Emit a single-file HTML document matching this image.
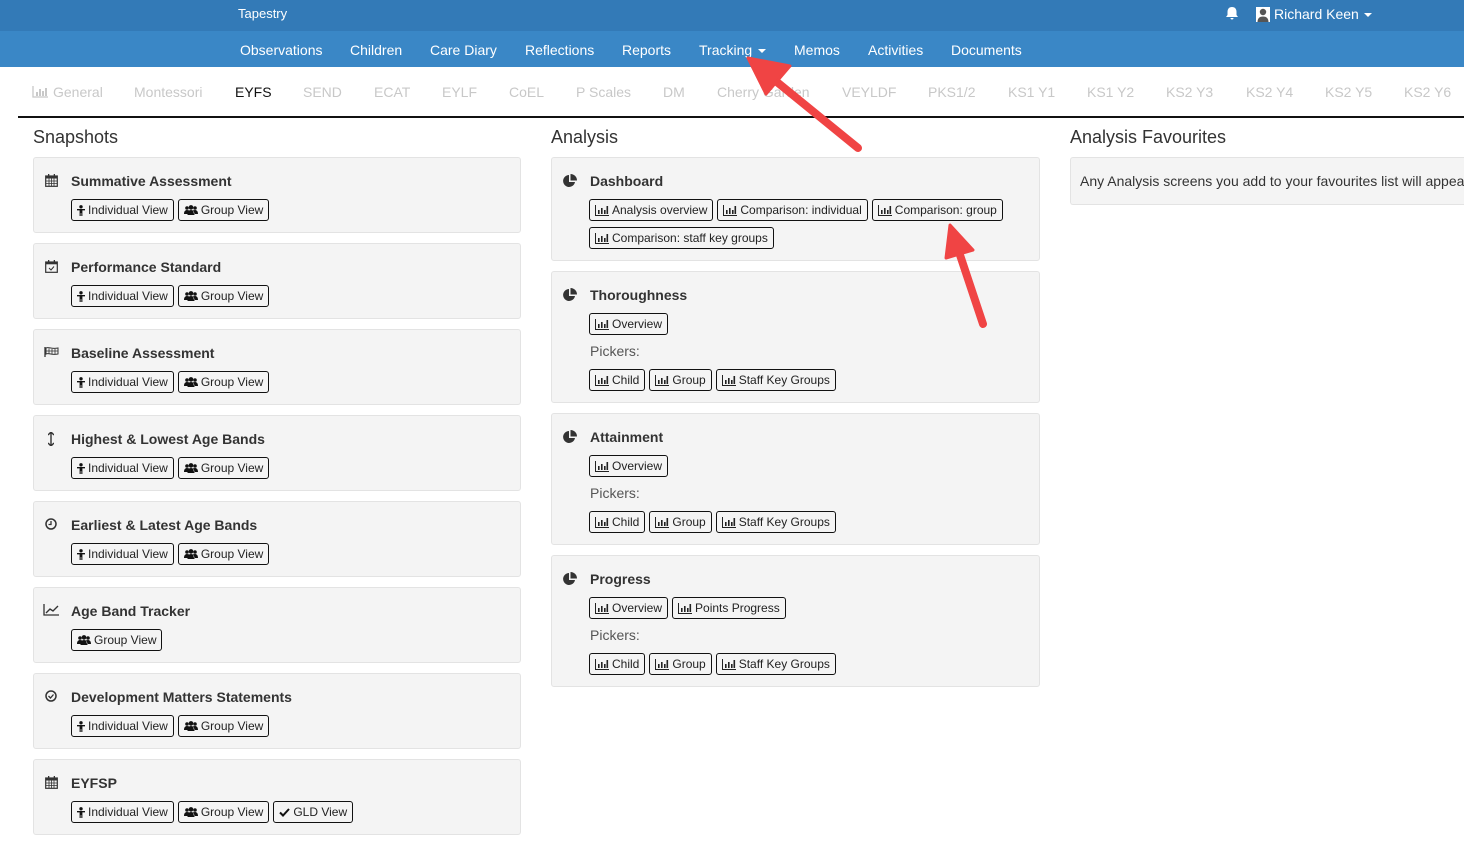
<!DOCTYPE html>
<html><head><meta charset="utf-8"><style>
*{box-sizing:border-box;margin:0;padding:0}
body{width:1464px;height:851px;overflow:hidden;background:#fff;font-family:"Liberation Sans",Arial,sans-serif;color:#333;position:relative}
.abs{position:absolute}
.top{left:0;top:0;width:1464px;height:31px;background:#337ab7}
.nav{left:0;top:31px;width:1464px;height:36px;background:#3a87c6}
.nv{position:absolute;top:42px;color:#fff;font-size:14px}
.tab{position:absolute;top:84px;color:#c8c8c8;font-size:14px}
.line{left:18px;top:116px;width:1446px;height:2px;background:#111}
h2{position:absolute;font-weight:normal;font-size:18px;color:#333;top:127px}
.p{position:absolute;background:#f4f4f4;border:1px solid #e3e3e3;border-radius:3px}
.t{position:absolute;font-weight:bold;font-size:14px;color:#333}
.row{position:absolute;display:flex;gap:4px}
.b{height:22px;border:1px solid #111;border-radius:3px;font-size:12px;color:#222;padding:0 5px;display:flex;align-items:center;white-space:nowrap}
.b svg{margin-right:3px}
.pk{position:absolute;font-size:14px;color:#555}
</style></head><body>
<svg width="0" height="0" style="position:absolute">
<defs>
<symbol id="per" viewBox="0 0 8 11"><circle cx="4" cy="1.8" r="1.7" fill="#111"/><path d="M0 4h8v1.4H5.4V11H4.3V8h-.6v3H2.6V5.4H0z" fill="#111"/></symbol>
<symbol id="grp" viewBox="0 0 14 10"><circle cx="3" cy="3" r="1.8" fill="#111"/><circle cx="11" cy="3" r="1.8" fill="#111"/><circle cx="7" cy="2.4" r="2.3" fill="#111"/><path d="M0 9c0-3 1.5-4 3-4s2 .5 2 .5L4 9z M14 9c0-3-1.5-4-3-4s-2 .5-2 .5L10 9z M3.5 10c0-3.5 1.5-5 3.5-5s3.5 1.5 3.5 5z" fill="#111"/></symbol>
<symbol id="bar" viewBox="0 0 14 11"><path d="M.5 0v10.5H14" stroke="#222" fill="none"/><rect x="3" y="5" width="1.6" height="4" fill="#222"/><rect x="6" y="3" width="1.6" height="6" fill="#222"/><rect x="9" y="5" width="1.6" height="4" fill="#222"/><rect x="11.5" y="1" width="1.6" height="8" fill="#222"/></symbol>
<symbol id="pie" viewBox="0 0 14 14"><path d="M6 1a6 6 0 1 0 6 7H6z" fill="#333"/><path d="M7.5 0v6.5H14A6.5 6.5 0 0 0 7.5 0z" fill="#333"/></symbol>
<symbol id="cal" viewBox="0 0 13 13"><rect x=".7" y="2" width="11.6" height="10.3" fill="none" stroke="#333" stroke-width="1.2"/><rect x=".7" y="2" width="11.6" height="2.5" fill="#333"/><rect x="3" y="0" width="1.3" height="3" fill="#333"/><rect x="8.7" y="0" width="1.3" height="3" fill="#333"/><path d="M1 7h11M1 9.5h11M4 4.5v8M6.5 4.5v8M9 4.5v8" stroke="#333" stroke-width=".8"/></symbol>
</defs></svg>
<div class="abs top"></div>
<div class="abs" style="left:238px;top:6px;color:#fff;font-size:13px">Tapestry</div>
<svg class="abs" style="left:1225px;top:6px" width="14" height="15" viewBox="0 0 14 15"><path d="M7 1c-3 0-4.5 2-4.5 5v3L1 11h12l-1.5-2V6C11.5 3 10 1 7 1z M5.5 12a1.5 1.5 0 0 0 3 0z" fill="#fff"/></svg>
<div class="abs" style="left:1256px;top:7px;width:14px;height:15px;background:#fff"><svg width="14" height="15" viewBox="0 0 14 15"><circle cx="7" cy="5" r="3.2" fill="#555"/><path d="M1.5 15c0-4 2.5-5.5 5.5-5.5s5.5 1.5 5.5 5.5z" fill="#555"/></svg></div>
<div class="abs" style="left:1274px;top:6px;color:#fff;font-size:14px">Richard Keen</div>
<div class="abs" style="left:1364px;top:13px;border-left:4px solid transparent;border-right:4px solid transparent;border-top:4px solid #fff"></div>
<div class="abs nav"></div>
<div class="nv" style="left:240px">Observations</div>
<div class="nv" style="left:350px">Children</div>
<div class="nv" style="left:430px">Care Diary</div>
<div class="nv" style="left:525px">Reflections</div>
<div class="nv" style="left:622px">Reports</div>
<div class="nv" style="left:699px">Tracking</div>
<div class="abs" style="left:758px;top:49px;border-left:4px solid transparent;border-right:4px solid transparent;border-top:4px solid #fff"></div>
<div class="nv" style="left:794px">Memos</div>
<div class="nv" style="left:868px">Activities</div>
<div class="nv" style="left:951px">Documents</div>

<svg class="abs" style="left:32px;top:86px" width="16" height="12" viewBox="0 0 16 12"><path d="M1 0v11h15" stroke="#c8c8c8" fill="none" stroke-width="1.3"/><rect x="4" y="6" width="2" height="4" fill="#c8c8c8"/><rect x="7" y="3" width="2" height="7" fill="#c8c8c8"/><rect x="10" y="5" width="2" height="5" fill="#c8c8c8"/><rect x="13" y="2" width="2" height="8" fill="#c8c8c8"/></svg>
<div class="tab" style="left:53px">General</div>
<div class="tab" style="left:134px">Montessori</div>
<div class="tab" style="left:235px;color:#111">EYFS</div>
<div class="tab" style="left:303px">SEND</div>
<div class="tab" style="left:374px">ECAT</div>
<div class="tab" style="left:442px">EYLF</div>
<div class="tab" style="left:509px">CoEL</div>
<div class="tab" style="left:576px">P Scales</div>
<div class="tab" style="left:663px">DM</div>
<div class="tab" style="left:717px">Cherry Garden</div>
<div class="tab" style="left:842px">VEYLDF</div>
<div class="tab" style="left:928px">PKS1/2</div>
<div class="tab" style="left:1008px">KS1 Y1</div>
<div class="tab" style="left:1087px">KS1 Y2</div>
<div class="tab" style="left:1166px">KS2 Y3</div>
<div class="tab" style="left:1246px">KS2 Y4</div>
<div class="tab" style="left:1325px">KS2 Y5</div>
<div class="tab" style="left:1404px">KS2 Y6</div>
<div class="abs line"></div>

<h2 style="left:33px">Snapshots</h2>
<h2 style="left:551px">Analysis</h2>
<h2 style="left:1070px">Analysis Favourites</h2>

<div class="p" style="left:33px;top:157px;width:488px;height:76px"></div>
<div class="p" style="left:33px;top:243px;width:488px;height:76px"></div>
<div class="p" style="left:33px;top:329px;width:488px;height:76px"></div>
<div class="p" style="left:33px;top:415px;width:488px;height:76px"></div>
<div class="p" style="left:33px;top:501px;width:488px;height:76px"></div>
<div class="p" style="left:33px;top:587px;width:488px;height:76px"></div>
<div class="p" style="left:33px;top:673px;width:488px;height:76px"></div>
<div class="p" style="left:33px;top:759px;width:488px;height:76px"></div>

<svg class="abs" style="left:45px;top:174px" width="13" height="13"><use href="#cal"/></svg>
<div class="t" style="left:71px;top:173px">Summative Assessment</div>
<svg class="abs" style="left:45px;top:260px" width="13" height="13" viewBox="0 0 13 13"><rect x=".7" y="2" width="11.6" height="10.3" fill="none" stroke="#333" stroke-width="1.2"/><rect x=".7" y="2" width="11.6" height="2.3" fill="#333"/><rect x="3" y="0" width="1.3" height="3" fill="#333"/><rect x="8.7" y="0" width="1.3" height="3" fill="#333"/><path d="M4 8l2 2 3-3.5" stroke="#333" fill="none" stroke-width="1"/></svg>
<div class="t" style="left:71px;top:259px">Performance Standard</div>
<svg class="abs" style="left:44px;top:347px" width="15" height="10" viewBox="0 0 15 10"><path d="M1 0v10" stroke="#333" stroke-width="1.3"/><path d="M2 1c3-1.5 5 1.5 12 0v6c-7 1.5-9-1.5-12 0z" fill="none" stroke="#333" stroke-width="1"/><path d="M5 1.5v5M8 2v5M11 2v5M2 4h12" stroke="#333" stroke-width=".8"/></svg>
<div class="t" style="left:71px;top:345px">Baseline Assessment</div>
<svg class="abs" style="left:48px;top:432px" width="6" height="14" viewBox="0 0 6 14"><path d="M3 1v12M0 3l3-3 3 3M0 11l3 3 3-3" stroke="#333" stroke-width="1.4" fill="none"/></svg>
<div class="t" style="left:71px;top:431px">Highest &amp; Lowest Age Bands</div>
<svg class="abs" style="left:45px;top:518px" width="12" height="12" viewBox="0 0 12 12"><circle cx="6" cy="6" r="5" fill="none" stroke="#333" stroke-width="1.5"/><path d="M6 3v3.5H3.5" stroke="#333" stroke-width="1.3" fill="none"/></svg>
<div class="t" style="left:71px;top:517px">Earliest &amp; Latest Age Bands</div>
<svg class="abs" style="left:43px;top:604px" width="16" height="12" viewBox="0 0 16 12"><path d="M1 0v11h15" stroke="#333" fill="none" stroke-width="1.3"/><path d="M3 9l4-4 3 2 5-5" stroke="#333" fill="none" stroke-width="1.4"/></svg>
<div class="t" style="left:71px;top:603px">Age Band Tracker</div>
<svg class="abs" style="left:45px;top:690px" width="12" height="12" viewBox="0 0 12 12"><circle cx="6" cy="6" r="5" fill="none" stroke="#333" stroke-width="1.5"/><path d="M3.5 6l2 2 3-3.5" stroke="#333" stroke-width="1.3" fill="none"/></svg>
<div class="t" style="left:71px;top:689px">Development Matters Statements</div>
<svg class="abs" style="left:45px;top:776px" width="13" height="13"><use href="#cal"/></svg>
<div class="t" style="left:71px;top:775px">EYFSP</div>

<div class="row" style="left:71px;top:199px"><div class="b"><svg width="8" height="11"><use href="#per"/></svg>Individual View</div><div class="b"><svg width="14" height="10"><use href="#grp"/></svg>Group View</div></div>
<div class="row" style="left:71px;top:285px"><div class="b"><svg width="8" height="11"><use href="#per"/></svg>Individual View</div><div class="b"><svg width="14" height="10"><use href="#grp"/></svg>Group View</div></div>
<div class="row" style="left:71px;top:371px"><div class="b"><svg width="8" height="11"><use href="#per"/></svg>Individual View</div><div class="b"><svg width="14" height="10"><use href="#grp"/></svg>Group View</div></div>
<div class="row" style="left:71px;top:457px"><div class="b"><svg width="8" height="11"><use href="#per"/></svg>Individual View</div><div class="b"><svg width="14" height="10"><use href="#grp"/></svg>Group View</div></div>
<div class="row" style="left:71px;top:543px"><div class="b"><svg width="8" height="11"><use href="#per"/></svg>Individual View</div><div class="b"><svg width="14" height="10"><use href="#grp"/></svg>Group View</div></div>
<div class="row" style="left:71px;top:629px"><div class="b"><svg width="14" height="10"><use href="#grp"/></svg>Group View</div></div>
<div class="row" style="left:71px;top:715px"><div class="b"><svg width="8" height="11"><use href="#per"/></svg>Individual View</div><div class="b"><svg width="14" height="10"><use href="#grp"/></svg>Group View</div></div>
<div class="row" style="left:71px;top:801px"><div class="b"><svg width="8" height="11"><use href="#per"/></svg>Individual View</div><div class="b"><svg width="14" height="10"><use href="#grp"/></svg>Group View</div><div class="b"><svg width="11" height="9" viewBox="0 0 11 9"><path d="M1 4.5l3 3L10 1" stroke="#111" stroke-width="2" fill="none"/></svg>GLD View</div></div>

<div class="p" style="left:551px;top:157px;width:489px;height:104px"></div>
<div class="p" style="left:551px;top:271px;width:489px;height:132px"></div>
<div class="p" style="left:551px;top:413px;width:489px;height:132px"></div>
<div class="p" style="left:551px;top:555px;width:489px;height:132px"></div>

<svg class="abs" style="left:563px;top:174px" width="14" height="14"><use href="#pie"/></svg>
<div class="t" style="left:590px;top:173px">Dashboard</div>
<svg class="abs" style="left:563px;top:288px" width="14" height="14"><use href="#pie"/></svg>
<div class="t" style="left:590px;top:287px">Thoroughness</div>
<svg class="abs" style="left:563px;top:430px" width="14" height="14"><use href="#pie"/></svg>
<div class="t" style="left:590px;top:429px">Attainment</div>
<svg class="abs" style="left:563px;top:572px" width="14" height="14"><use href="#pie"/></svg>
<div class="t" style="left:590px;top:571px">Progress</div>

<div class="row" style="left:589px;top:199px"><div class="b"><svg width="14" height="11"><use href="#bar"/></svg>Analysis overview</div><div class="b"><svg width="14" height="11"><use href="#bar"/></svg>Comparison: individual</div><div class="b"><svg width="14" height="11"><use href="#bar"/></svg>Comparison: group</div></div>
<div class="row" style="left:589px;top:227px"><div class="b"><svg width="14" height="11"><use href="#bar"/></svg>Comparison: staff key groups</div></div>

<div class="row" style="left:589px;top:313px"><div class="b"><svg width="14" height="11"><use href="#bar"/></svg>Overview</div></div>
<div class="pk" style="left:590px;top:343px">Pickers:</div>
<div class="row" style="left:589px;top:369px"><div class="b"><svg width="14" height="11"><use href="#bar"/></svg>Child</div><div class="b"><svg width="14" height="11"><use href="#bar"/></svg>Group</div><div class="b"><svg width="14" height="11"><use href="#bar"/></svg>Staff Key Groups</div></div>

<div class="row" style="left:589px;top:455px"><div class="b"><svg width="14" height="11"><use href="#bar"/></svg>Overview</div></div>
<div class="pk" style="left:590px;top:485px">Pickers:</div>
<div class="row" style="left:589px;top:511px"><div class="b"><svg width="14" height="11"><use href="#bar"/></svg>Child</div><div class="b"><svg width="14" height="11"><use href="#bar"/></svg>Group</div><div class="b"><svg width="14" height="11"><use href="#bar"/></svg>Staff Key Groups</div></div>

<div class="row" style="left:589px;top:597px"><div class="b"><svg width="14" height="11"><use href="#bar"/></svg>Overview</div><div class="b"><svg width="14" height="11"><use href="#bar"/></svg>Points Progress</div></div>
<div class="pk" style="left:590px;top:627px">Pickers:</div>
<div class="row" style="left:589px;top:653px"><div class="b"><svg width="14" height="11"><use href="#bar"/></svg>Child</div><div class="b"><svg width="14" height="11"><use href="#bar"/></svg>Group</div><div class="b"><svg width="14" height="11"><use href="#bar"/></svg>Staff Key Groups</div></div>

<div class="p" style="left:1070px;top:157px;width:400px;height:48px;border-right:none"></div>
<div class="abs" style="left:1080px;top:173px;font-size:14px;color:#333;white-space:nowrap">Any Analysis screens you add to your favourites list will appear here</div>

<svg class="abs" style="left:0;top:0" width="1464" height="851">
<g fill="#f04444" stroke="#f04444" stroke-linecap="round" stroke-linejoin="round">
<line x1="858" y1="148" x2="772" y2="78" stroke-width="8"/>
<polygon points="748,58 790,66 766,94" stroke-width="3"/>
<line x1="983" y1="324" x2="960" y2="255" stroke-width="8"/>
<polygon points="950,225 973,250 946,258" stroke-width="3"/>
</g>
</svg>
</body></html>
